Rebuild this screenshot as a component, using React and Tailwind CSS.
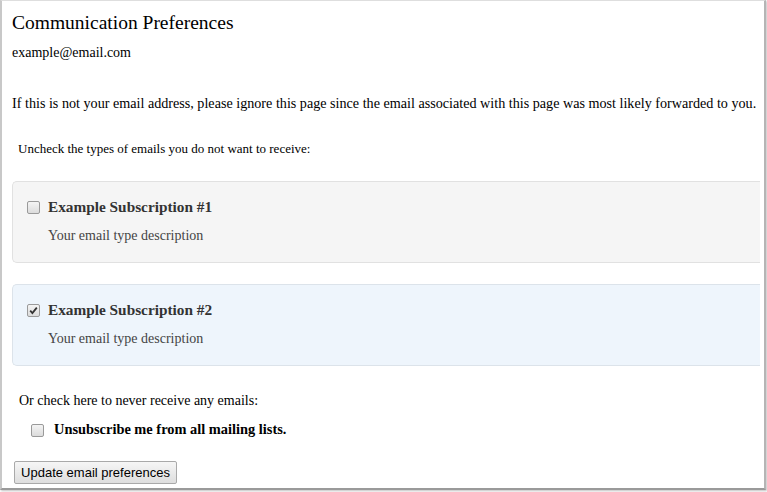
import React from 'react';

function Box({ checked }) {
  return (
    <span className="inline-flex items-center justify-center w-[13px] h-[13px] border border-[#9a9a9a] rounded-[2px] bg-gradient-to-b from-[#f4f4f4] to-[#dcdcdc] shrink-0">
      {checked && (
        <svg width="9" height="9" viewBox="0 0 9 9">
          <path d="M1.2 4.6 L3.4 7 L7.8 1.6" fill="none" stroke="#333" strokeWidth="1.8" />
        </svg>
      )}
    </span>
  );
}

function Subscription({ title, checked }) {
  return (
    <div
      className={
        'h-[82px] border border-r-0 rounded-l-[5px] pl-[14px] pt-[15px] ' +
        (checked ? 'bg-[#eef5fc] border-[#dce3ea]' : 'bg-[#f5f5f5] border-[#e1e1e1]')
      }
    >
      <div className="flex items-center gap-[8px] h-[20px]">
        <Box checked={checked} />
        <span className="font-bold text-[15.3px] text-[#333]">{title}</span>
      </div>
      <div className="pl-[21px] mt-[8px] text-[14px] text-[#444]">Your email type description</div>
    </div>
  );
}

export default function App() {
  return (
    <div className="w-[767px] h-[492px] bg-white overflow-hidden font-['Liberation_Serif',serif]">
      <div className="w-[766px] h-[490px] border-t border-t-[#dedede] border-l-2 border-l-[#c8c8c8] border-r-2 border-r-[#b5b5b5] border-b-2 border-b-[#9a9a9a] shadow-[1px_1px_2px_rgba(0,0,0,0.25)] bg-white">
        <div className="pl-[10px] pr-[4px] text-black">
          <h1 className="text-[19.5px] leading-[24px] pt-[10px]">Communication Preferences</h1>
          <p className="text-[14px] leading-[16px] mt-[10px]">example@email.com</p>
          <p className="text-[14.15px] leading-[16px] mt-[34px] whitespace-nowrap">
            If this is not your email address, please ignore this page since the email associated with this page was most likely forwarded to you.
          </p>
          <p className="text-[13px] leading-[16px] mt-[30px] pl-[6px]">Uncheck the types of emails you do not want to receive:</p>
          <div className="mt-[24px]">
            <Subscription title="Example Subscription #1" />
          </div>
          <div className="mt-[21px]">
            <Subscription title="Example Subscription #2" checked />
          </div>
          <p className="text-[14px] leading-[16px] mt-[27px] pl-[7px]">Or check here to never receive any emails:</p>
          <div className="flex items-center gap-[10px] pl-[19px] mt-[12px] h-[18px]">
            <Box />
            <span className="font-bold text-[14.4px]">Unsubscribe me from all mailing lists.</span>
          </div>
          <button className="mt-[22px] ml-[2px] h-[23px] w-[163px] border border-[#a9a9a9] rounded-[2px] bg-gradient-to-b from-[#f6f6f6] to-[#dedede] text-[13px] text-black font-['Liberation_Sans',sans-serif]">
            Update email preferences
          </button>
        </div>
      </div>
    </div>
  );
}
